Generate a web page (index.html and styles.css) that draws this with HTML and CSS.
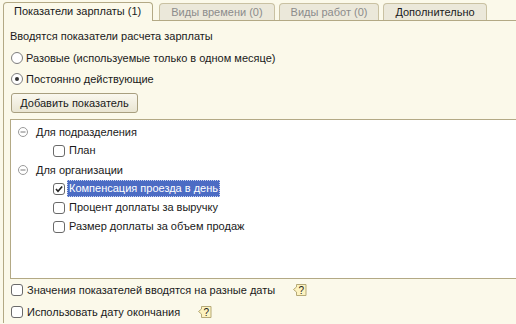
FILE: index.html
```html
<!DOCTYPE html>
<html lang="ru">

<head>
    <meta charset="UTF-8">
    <title>Показатели зарплаты</title>
    <link rel="stylesheet" href="styles.css">
</head>

<body>
    <div class="form">
        <div class="tab-header">
            <span class="tab-item active">Показатели зарплаты (1)</span>
            <span class="tab-item disabled">Виды времени (0)</span>
            <span class="tab-item disabled">Виды работ (0)</span>
            <span class="tab-item">Дополнительно</span>
        </div>
        <div class="tab-panel">
            <div class="caption">Вводятся показатели расчета зарплаты</div>
            <label class="radio-row"><span class="radio"></span>Разовые (используемые только в одном месяце)</label>
            <label class="radio-row"><span class="radio checked"></span>Постоянно действующие</label>
            <button class="btn">Добавить показатель</button>

            <div class="tree">
                <div class="tree-row group">
                    <svg class="toggle" width="10" height="10" viewBox="0 0 10 10"><circle cx="5" cy="5" r="4.5" fill="#fff" stroke="#9a9a9a"/><path d="M2.5 5h5" stroke="#7a7a7a"/></svg>
                    <span>Для подразделения</span>
                </div>
                <div class="tree-row item">
                    <span class="check"></span><span class="label">План</span>
                </div>
                <div class="tree-row group">
                    <svg class="toggle" width="10" height="10" viewBox="0 0 10 10"><circle cx="5" cy="5" r="4.5" fill="#fff" stroke="#9a9a9a"/><path d="M2.5 5h5" stroke="#7a7a7a"/></svg>
                    <span>Для организации</span>
                </div>
                <div class="tree-row item">
                    <span class="check checked"><svg width="10" height="10" viewBox="0 0 10 10"><path d="M2 5l2 2.2L8.2 2.5" fill="none" stroke="#222" stroke-width="1.6"/></svg></span><span class="label selected">Компенсация проезда в день</span>
                </div>
                <div class="tree-row item">
                    <span class="check"></span><span class="label">Процент доплаты за выручку</span>
                </div>
                <div class="tree-row item">
                    <span class="check"></span><span class="label">Размер доплаты за объем продаж</span>
                </div>
            </div>

            <label class="check-row"><span class="check"></span>Значения показателей вводятся на разные даты<svg class="help" width="14" height="12" viewBox="0 0 14 12"><path d="M3.5 0.5h9.5v11h-9.5v-3.5l-3-2.5 3-2.5z" fill="#fdf3c0" stroke="#b5a977"/><text x="8.3" y="9.5" text-anchor="middle" font-size="10" font-family="Liberation Sans, Arial, sans-serif" fill="#222">?</text></svg></label>
            <label class="check-row"><span class="check"></span>Использовать дату окончания<svg class="help" width="14" height="12" viewBox="0 0 14 12"><path d="M3.5 0.5h9.5v11h-9.5v-3.5l-3-2.5 3-2.5z" fill="#fdf3c0" stroke="#b5a977"/><text x="8.3" y="9.5" text-anchor="middle" font-size="10" font-family="Liberation Sans, Arial, sans-serif" fill="#222">?</text></svg></label>
        </div>
    </div>
</body>

</html>
```

FILE: styles.css
```css
html,
body {
    margin: 0;
    height: 100%;
    overflow: hidden;
}

body {
    background-color: #fbf9ea;
    font-family: "Liberation Sans", Arial, sans-serif;
    font-size: 11px;
    color: #1a1a1a;
}

.form {
    padding: 2px 0 0 3px;
}

.tab-header {
    display: flex;
    align-items: flex-end;
    height: 18px;
    position: relative;
    z-index: 1;
}

.tab-header .tab-item {
    box-sizing: border-box;
    height: 17px;
    line-height: 16px;
    padding: 0 11px;
    margin-right: 4px;
    border: 1px solid #c9c1a2;
    border-bottom: none;
    border-radius: 4px 4px 0 0;
    background-color: #ebe8da;
}

.tab-header .tab-item.active {
    height: 19px;
    padding: 0 11px 0 10px;
    margin-right: 6px;
    border-color: #b3a985;
    background-color: #fbf9ea;
    margin-bottom: -1px;
}

.tab-header .tab-item.disabled {
    color: #8c8c8c;
}

.tab-panel {
    border-left: 1px solid #b3a985;
    border-top: 1px solid #b3a985;
    padding: 7px 0 0 6px;
    display: flex;
    flex-direction: column;
    align-items: flex-start;
}

.caption {
    line-height: 16px;
}

.radio-row {
    display: flex;
    align-items: center;
    height: 21px;
}

.radio-row:first-of-type {
    margin-top: 3px;
}

.radio {
    box-sizing: border-box;
    width: 12px;
    height: 12px;
    margin: 0 3px 0 1px;
    border: 1px solid #7d7d7d;
    border-radius: 50%;
    background-color: #fff;
    display: flex;
    align-items: center;
    justify-content: center;
}

.radio.checked::after {
    content: "";
    width: 4px;
    height: 4px;
    border-radius: 50%;
    background-color: #333;
}

.btn {
    box-sizing: border-box;
    margin: 4px 0 0 1px;
    height: 20px;
    width: 127px;
    padding: 0 0 1px;
    font: inherit;
    color: inherit;
    border: 1px solid #a89f7f;
    border-radius: 3px;
    background: linear-gradient(#faf8ef, #e9e5d2);
}

.tree {
    box-sizing: border-box;
    align-self: stretch;
    margin-top: 6px;
    height: 160px;
    border: 1px solid #b3a985;
    border-right: none;
    background-color: #fff;
    padding-top: 2px;
}

.tree-row {
    display: flex;
    align-items: center;
    height: 19px;
}

.tree-row.group {
    padding-left: 7px;
}

.tree-row.group .toggle {
    margin-right: 8px;
}

.tree-row.item {
    padding-left: 42px;
}

.check {
    box-sizing: border-box;
    flex: none;
    width: 12px;
    height: 12px;
    border: 1px solid #6a6a6a;
    border-radius: 3px;
    background-color: #fff;
    display: flex;
    align-items: center;
    justify-content: center;
}

.tree-row .label {
    margin-left: 2px;
    padding: 0 2px;
    line-height: 17px;
}

.tree-row .label.selected {
    background-color: #4c6cc4;
    color: #fff;
    outline: 1px dotted #c9d2ef;
    outline-offset: -1px;
}

.check-row {
    display: flex;
    align-items: center;
    height: 22px;
}

.check-row:first-of-type {
    margin-top: 3px;
}

.check-row .check {
    margin: 0 4px 0 1px;
}

.check-row .help {
    margin-left: 18px;
}
```
